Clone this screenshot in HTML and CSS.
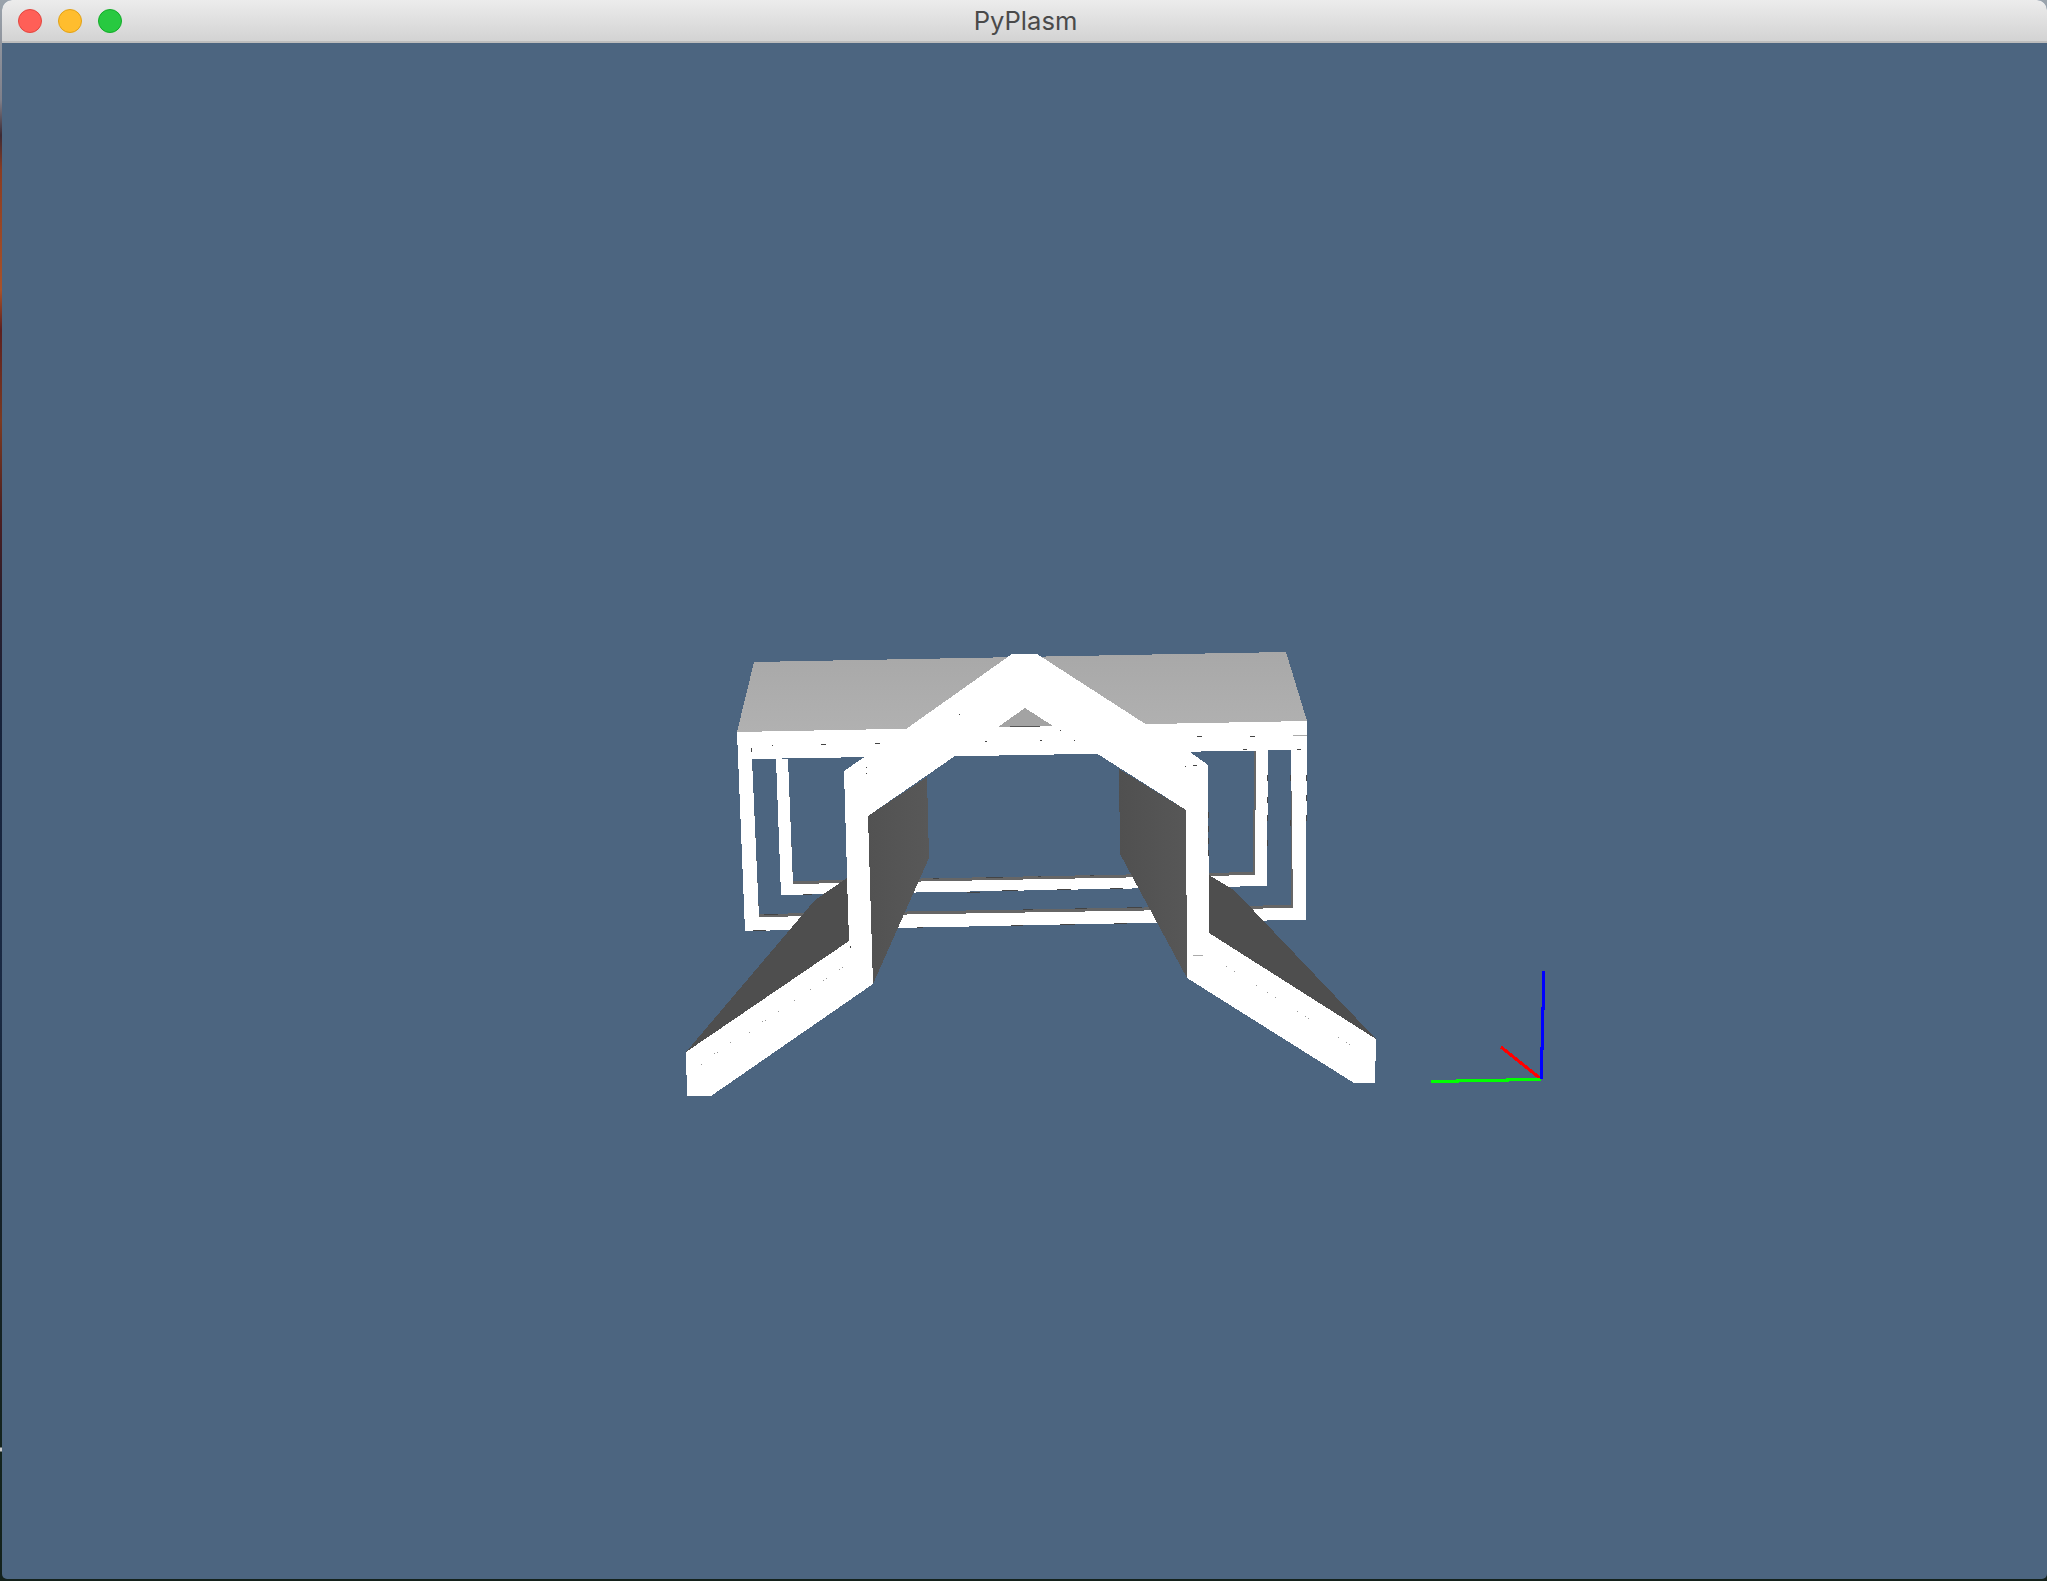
FILE: index.html
```html
<!DOCTYPE html>
<html lang="en">
<head>
<meta charset="utf-8">
<title>PyPlasm</title>
<link rel="stylesheet" href="styles.css">
</head>
<body>
<div class="desktop">
  <div class="window">
    <header class="titlebar">
      <div class="lights">
        <span class="light light-close"></span>
        <span class="light light-min"></span>
        <span class="light light-max"></span>
      </div>
      <h1 class="title">PyPlasm</h1>
    </header>
    <main class="viewport">
      <svg class="scene" viewBox="2 43 2045 1536" preserveAspectRatio="none" aria-hidden="true">
        <defs>
          <linearGradient id="roof" x1="0" y1="0" x2="0" y2="1">
            <stop offset="0" stop-color="#a8a8a8"/>
            <stop offset="1" stop-color="#b1b1b1"/>
          </linearGradient>
          <linearGradient id="wall" x1="0" y1="0" x2="1" y2="0">
            <stop offset="0" stop-color="#525252"/>
            <stop offset="1" stop-color="#585858"/>
          </linearGradient>
          <linearGradient id="wallr" x1="1" y1="0" x2="0" y2="0">
            <stop offset="0" stop-color="#575757"/>
            <stop offset="1" stop-color="#505050"/>
          </linearGradient>
        </defs>

        <polygon class="roof" points="754,662 1286,652 1307,721 737,732"/>

        <path class="edge" d="M750,759H752L759,915V917H757ZM786,759H788L793,882V884H791ZM793,881L1255,872V875L793,884ZM759,914L1293,905V908L759,917ZM1254,750H1256L1255,873H1253ZM1291,750H1293V906H1291Z"/>
        <path class="bar" fill-rule="evenodd" d="M737,732L1307,721L1306,920L1293,920L745,931ZM752,759L759,917L1293,908L1291,750Z"/>
        <path class="bar" fill-rule="evenodd" d="M776,759L781,895L1267,886L1268,750L1256,750L1255,875L793,884L788,759Z"/>

        <path class="specks" d="M933,878h6v1h-6ZM986,877h17v1h-17ZM1038,876h3v1h-3ZM1090,875h4v1h-4ZM764,914h14v1h-14ZM1023,909h10v1h-10ZM1075,908h12v1h-12ZM1127,907h15v1h-15ZM753,930h13v1h-13ZM917,927h6v1h-6ZM1011,925h12v1h-12ZM1060,924h15v1h-15ZM1114,923h13v1h-13ZM803,894h9v1h-9ZM967,892h13v1h-13ZM1002,890h16v1h-16ZM1057,889h14v1h-14ZM1110,888h13v1h-13Z"/>

        <polygon class="wall" points="868,816 927,777 929,858 873,984"/>
        <polygon class="wall-r" points="1119,769 1186,810 1187,978 1120,854"/>
        <polygon class="panel" points="847,878 815,900 686,1052 849,941"/>
        <polygon class="panel" points="1209,875 1234,890 1376,1039 1209,933"/>

        <polygon class="bar" points="1012,654 1037,654 1147,725 1190,752 1208,765 1209,933 1376,1039 1375,1083 1354,1083 1187,978 1186,810 1096,753 955,756 868,816 873,984 711,1096 687,1096 686,1052 849,941 844,771 863,758 906,729"/>
        <polygon class="bar" points="906,729 1147,725 1190,752 863,758"/>
        <polygon class="gable" points="1025,708 1053,726 998,727"/>
        <path class="shadow" d="M1010,726H1040V727H1010Z"/>

        <path class="specks" d="M751,748h1v4h-1ZM772,745h1v1h-1ZM821,744h5v1h-5ZM875,743h5v1h-5ZM866,767h1v1h-1ZM866,773h1v1h-1ZM959,714h1v1h-1ZM985,741h2v1h-2ZM1040,740h2v1h-2ZM1060,730h1v1h-1ZM1074,740h1v1h-1ZM1197,736h5v1h-5ZM1250,736h5v1h-5ZM1185,766h1v1h-1ZM1193,765h4v1h-4ZM1243,749h4v1h-4ZM1297,749h4v1h-4ZM850,946h1v2h-1Z"/>
        <path class="specks" d="M1208,812h1v6h-1ZM1208,826h1v6h-1ZM1208,838h1v6h-1ZM1208,850h1v6h-1ZM1267,775h1v6h-1ZM1267,797h1v6h-1ZM1267,815h1v6h-1ZM1267,840h1v6h-1ZM1306,775h1v6h-1ZM1306,795h1v6h-1ZM1306,815h1v6h-1ZM1290,775h1v6h-1ZM1290,820h1v6h-1Z"/>
        <path class="dots" d="M701,1064h1v1h-1ZM714,1053h1v1h-1ZM717,1052h1v1h-1ZM730,1042h1v1h-1ZM749,1032h1v1h-1ZM762,1021h1v1h-1ZM765,1020h1v1h-1ZM778,1011h1v1h-1ZM794,1000h1v1h-1ZM810,989h1v1h-1ZM823,980h1v1h-1ZM826,978h1v1h-1ZM839,969h1v1h-1ZM842,967h1v1h-1ZM1226,966h1v1h-1ZM1234,971h1v1h-1ZM1256,985h1v1h-1ZM1267,992h1v1h-1ZM1275,997h1v1h-1ZM1297,1011h1v1h-1ZM1305,1016h1v1h-1ZM1308,1018h1v1h-1ZM1338,1037h1v1h-1ZM1346,1042h1v1h-1ZM1349,1044h1v1h-1Z"/>
        <path class="glint" d="M1193,955h10v1h-10ZM1293,735h14v1h-14Z"/>

        <line class="axis axis-x" x1="1541" y1="1079" x2="1501" y2="1047"/>
        <path class="axis axis-y" d="M1541,1079H1507V1080H1457V1081H1431"/>
        <path class="axis axis-z" d="M1541,1079V1048H1542V1008H1543V971"/>
      </svg>
    </main>
  </div>
</div>
</body>
</html>
```
FILE: styles.css
```css
html, body {
  margin: 0;
  height: 100%;
  overflow: hidden;
}

.desktop {
  height: 100vh;
  display: flex;
  background: linear-gradient(180deg, #9aa3ac 0, #80808a 100px, #3c2a34 135px, #8a3c22 170px, #a8522a 290px, #5c2020 330px, #7c3a22 420px, #4a1e22 520px, #2a1e2c 600px, #16223a 720px, #1a2a44 1000px, #142028 1200px, #14241e 1447px, #c8c8c8 1448px, #c8c8c8 1451px, #14241e 1452px, #14221c 1581px);
}

.window {
  flex: 1;
  margin: 0 0 2px 2px;
  display: flex;
  flex-direction: column;
  border-radius: 10px 10px 5px 5px;
  overflow: hidden;
  background: #4c6580;
}

.titlebar {
  flex: 0 0 43px;
  box-sizing: border-box;
  display: flex;
  align-items: center;
  justify-content: center;
  position: relative;
  background: linear-gradient(180deg, #ececec 0, #d3d3d3 100%);
  border-bottom: 2px solid #bdbdbd;
}

.lights {
  position: absolute;
  left: 16px;
  top: 9px;
  display: flex;
  gap: 16px;
}

.light {
  width: 24px;
  height: 24px;
  box-sizing: border-box;
  border-radius: 50%;
  border: 1px solid transparent;
}

.light-close { background: #ff5f57; border-color: #e2463f; }
.light-min { background: #ffbd2e; border-color: #e1a116; }
.light-max { background: #28c940; border-color: #12ac28; }

.title {
  margin: 0 0 0 2px;
  font: 400 25.6px/1 "Inter", "Liberation Sans", sans-serif;
  color: #4a4a4a;
}

.viewport {
  flex: 1;
  min-height: 0;
  display: flex;
}

.scene {
  flex: 1;
  display: block;
  width: 100%;
  height: 100%;
  shape-rendering: crispEdges;
}

.roof { fill: url(#roof); }
.bar { fill: #fff; }
.edge { fill: #666; }
.wall { fill: url(#wall); }
.wall-r { fill: url(#wallr); }
.panel { fill: #4e4e4e; }
.gable { fill: #a3a3a3; }
.shadow { fill: #555; }
.specks { fill: #444; }
.dots { fill: #999; }
.glint { fill: #aaa; }

.axis {
  fill: none;
  stroke-width: 3;
}

.axis-x { stroke: #f00; }
.axis-y { stroke: #0f0; }
.axis-z { stroke: #00f; }
```
